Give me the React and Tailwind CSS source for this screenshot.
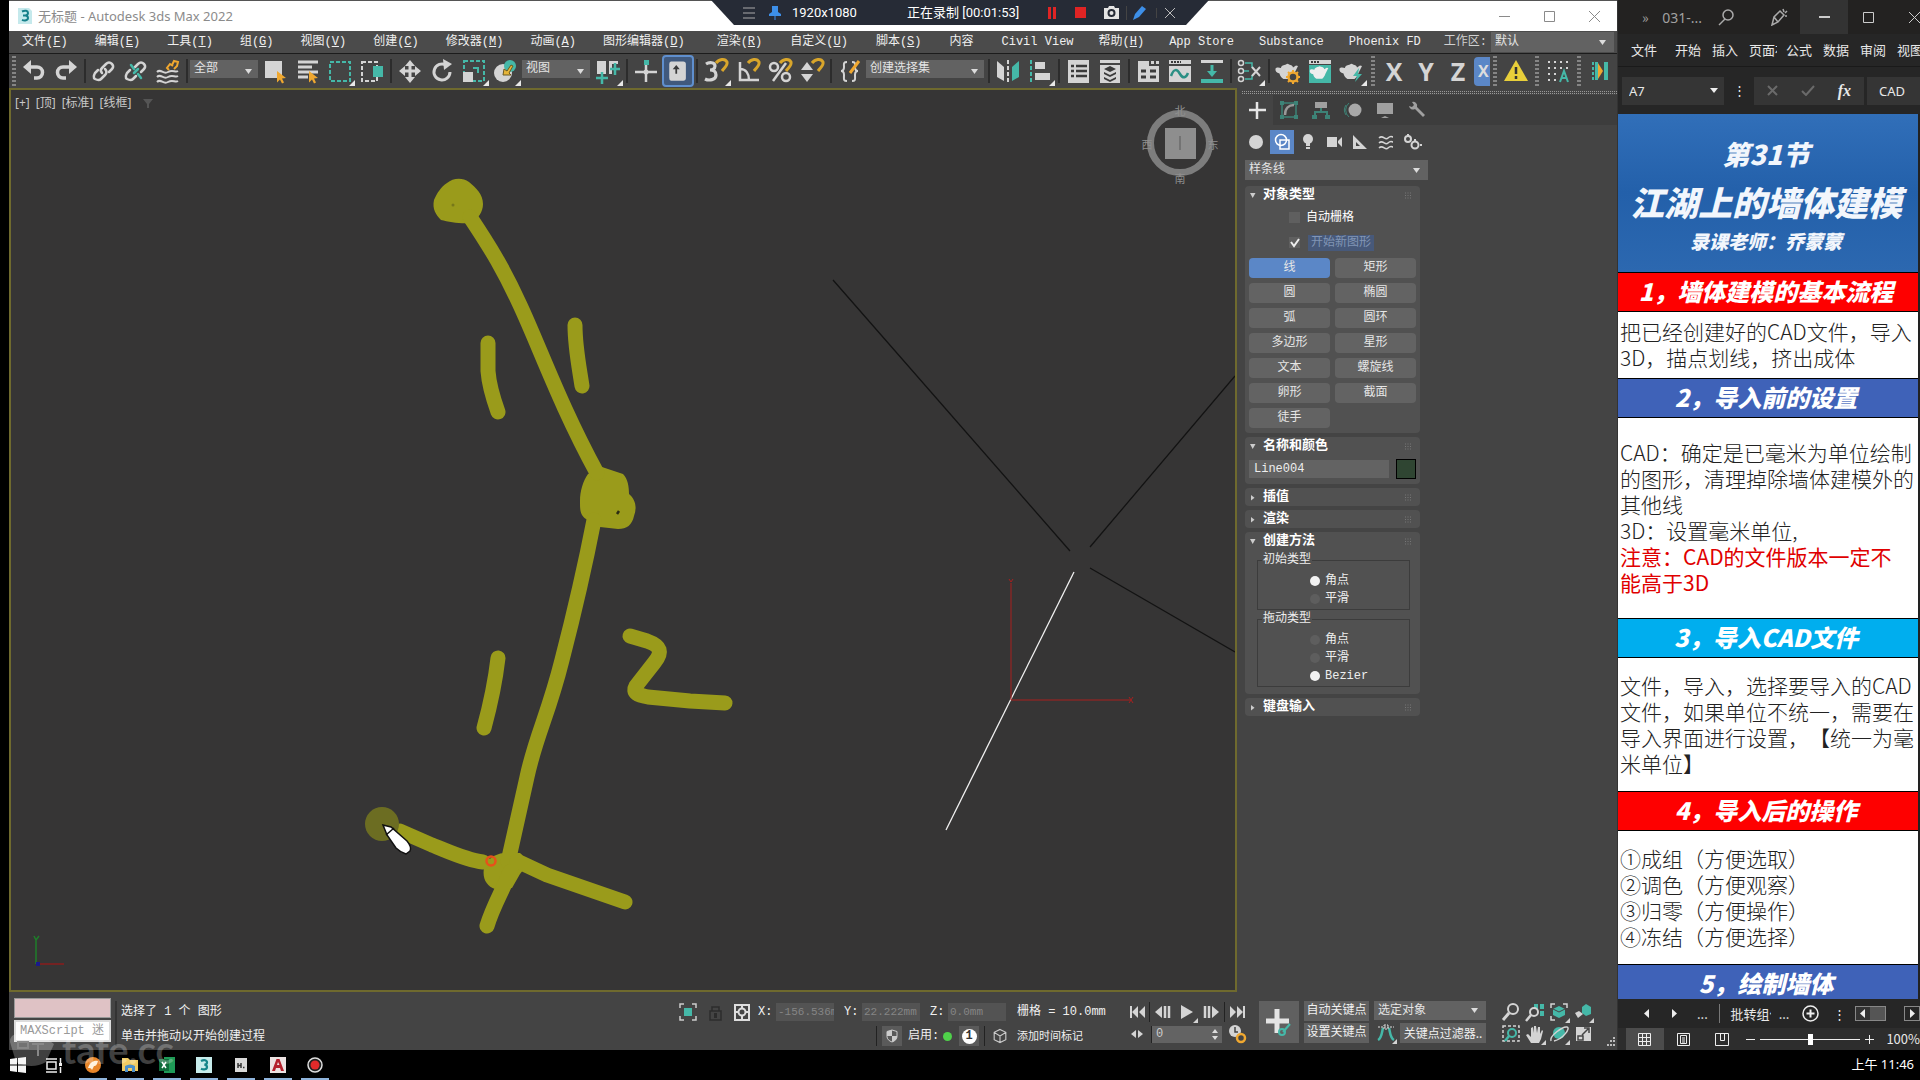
// App.jsx
import React from 'react';

const L = '#d4d4d4';
const T = '#45b8a8';
const Y = '#f0a830';

const Svg = ({ w = 32, h, box, children, className = '' }) => (
  <svg
    width={w}
    height={h || w}
    viewBox={box || `0 0 ${w} ${h || w}`}
    fill="none"
    className={`shrink-0 ${className}`}
    aria-hidden="true"
  >
    {children}
  </svg>
);

const Flyout = () => <path d="M31 25v6h-6z" fill="#e8e8e8" />;

const Teapot = ({ fill = L }) => (
  <path
    d="M9 13c0-2 3-3 5-3.400a1.800 1.800 0 0 1 3 0c2 .4 4 1.400 4 3l3-2 2 .5-3.500 7c-1 3-2.500 5-4 6h-7c-2-1-3.500-3-4-5.500-3-.5-4.500-2.500-4-5 .5-1.500 3.500-1.500 5.500-.6z"
    fill={fill}
  />
);

const Magnet = ({ x = 0, y = 0 }) => (
  <path
    transform={`translate(${x} ${y})`}
    d="M16 8c3-4 9-5 11-1 1 3-2 5-5 9"
    stroke="#d9a62b"
    strokeWidth="3"
  />
);

const icons = {
  undo: (
    <>
      <path d="M10 12h9a5 5 0 0 1 0 11h-3" stroke={L} strokeWidth="3.500" />
      <path d="M5 12l8-7v14z" fill={L} />
    </>
  ),
  redo: (
    <>
      <path d="M22 12h-9a5 5 0 0 0 0 11h3" stroke={L} strokeWidth="3.500" />
      <path d="M27 12l-8-7v14z" fill={L} />
    </>
  ),
  link: (
    <g stroke={L} strokeWidth="2.500" strokeLinecap="round">
      <path d="M14 18c-2-2-1-4 0-5l4-4c2-2 4-2 6 0s1 4 0 5l-3 3" />
      <path d="M17 14c2 2 2 4 0 6l-4 4c-2 2-4 1-6 0s-1-4 0-6l3-3" />
    </g>
  ),
  unlink: (
    <g strokeWidth="2.500" strokeLinecap="round">
      <path d="M15 12l3-3c2-2 4-2 6 0s1 4 0 5l-3 3" stroke={L} />
      <path d="M16 21l-3 3c-2 2-4 1-6 0s-1-4 0-6l3-3" stroke={L} />
      <path d="M11 10l3 4M18 19l3 4M18 14l-4 4" stroke={T} />
    </g>
  ),
  bind: (
    <>
      <path d="M5 17c4-4 6 3 11 0s7 1 10-1M5 22c4-4 6 3 11 0s7 1 10-1M5 27c4-4 6 3 11 0s7 1 10-1" stroke={L} strokeWidth="2" />
      <path d="M17 15l-2-2 3-4 3 2M20 10l2-4 4 1-1 4-3 3" stroke={Y} strokeWidth="2" />
    </>
  ),
  pick: (
    <>
      <path d="M5 6h17v17H5z" fill={L} />
      <path d="M17 16l9 7-4 .5 2 4-2 1-2-4-3 3z" fill={Y} />
    </>
  ),
  pickName: (
    <>
      <path d="M6 7h20M6 12h14M6 17h20M6 22h10" stroke={L} strokeWidth="3" />
      <path d="M17 16l9 7-4 .5 2 4-2 1-2-4-3 3z" fill={Y} />
    </>
  ),
  region: (
    <>
      <path d="M6 7h20v19H6z" stroke={T} strokeWidth="2" strokeDasharray="4 2" />
      <Flyout />
    </>
  ),
  crossing: (
    <>
      <path d="M6 7h15v19H6z" stroke={L} strokeWidth="2" strokeDasharray="4 2" />
      <path d="M17 11h10v11H17z" fill={T} />
    </>
  ),
  move: (
    <>
      <path d="M16 8v17M8 16h17" stroke={L} strokeWidth="3" />
      <path d="M16 5l5 6H11zM16 28l5-6H11zM5 16l6-5v10zM27 16l-6-5v10z" fill={L} />
    </>
  ),
  rotate: (
    <>
      <path d="M20 10a8 8 0 1 0 4 7" stroke={L} strokeWidth="3" />
      <path d="M17 4l9 5-8 6z" fill={L} />
    </>
  ),
  scale: (
    <>
      <path d="M6 6h20v20H6z" stroke={T} strokeWidth="2" strokeDasharray="4 2" />
      <path d="M5 17h10v10H5z" fill={L} />
      <path d="M15 13h5v5" stroke={T} strokeWidth="2" />
      <Flyout />
    </>
  ),
  place: (
    <>
      <circle cx="13" cy="18" r="9" fill={L} />
      <circle cx="20" cy="11" r="6" fill={T} />
      <path d="M13 20l1-6 3 2 4-6 2 1-4 7 2 2z" fill="#e6b53a" stroke="#6b5a20" />
      <Flyout />
    </>
  ),
  pivot: (
    <>
      <path d="M5 6h9v13H5zM17 6h9v13h-9z" fill={L} />
      <path d="M9 19h7v8H9zM20 9h7v10h-7z" fill="#444" />
      <path d="M10 17v12M4 23h12M23 8v12M18 14h10" stroke={T} strokeWidth="2.500" />
      <Flyout />
    </>
  ),
  manipulate: (
    <>
      <path d="M16 9v18M5 17h22" stroke={L} strokeWidth="2.500" />
      <path d="M14 5h5v5h-5z" fill={T} />
      <circle cx="16" cy="17" r="2.500" fill={L} />
    </>
  ),
  keyOverride: (
    <>
      <path d="M8 5h14q3 0 3 3v16q0 3-3 3H8q-2 0-2-3V8q0-3 2-3z" fill={L} />
      <path d="M13 19v-5h-3l4-5 4 5h-3v5z" fill="#3a3a3a" />
    </>
  ),
  snap: (
    <>
      <path d="M6 9c3-2 9-2 9 2 0 3-3 4-5 4 3 0 6 1 6 5 0 5-7 6-11 4" stroke={L} strokeWidth="3.200" />
      <Magnet />
      <Flyout />
    </>
  ),
  angleSnap: (
    <>
      <path d="M8 7v18h19M8 14c6 0 9 5 9 11" stroke={L} strokeWidth="2.500" />
      <Magnet />
    </>
  ),
  percentSnap: (
    <>
      <circle cx="10" cy="12" r="4" stroke={L} strokeWidth="2.500" />
      <circle cx="22" cy="22" r="4" stroke={L} strokeWidth="2.500" />
      <path d="M22 8L9 26" stroke={L} strokeWidth="2.500" />
      <Magnet />
    </>
  ),
  spinSnap: (
    <>
      <path d="M11 7l6 8H5zM11 27l6-8H5z" fill={L} />
      <Magnet />
    </>
  ),
  namedSet: (
    <>
      <path d="M13 7c-4 0-3 2-3 5 0 2-1 4-3 4 2 0 3 2 3 4 0 4-1 6 3 6M18 7c4 0 3 2 3 5 0 2 1 4 3 4-2 0-3 2-3 4 0 4 1 6-3 6" stroke={L} strokeWidth="2" />
      <path d="M16 18l9-12" stroke={Y} strokeWidth="3" />
    </>
  ),
  mirror: (
    <>
      <path d="M5 6l7 6v14l-7-4z" fill={L} />
      <path d="M27 6l-7 6v14l7-4z" fill={T} />
      <path d="M16 5v23" stroke={L} strokeWidth="2" strokeDasharray="4 2" />
    </>
  ),
  align: (
    <>
      <path d="M7 5v23" stroke={T} strokeWidth="2" strokeDasharray="4 2" />
      <path d="M11 7h10v7H11zM11 18h15v7H11z" fill={L} />
      <Flyout />
    </>
  ),
  sceneExplorer: (
    <>
      <path d="M6 5h21v23H6z" fill={L} />
      <path d="M9 11h3M14 11h11M9 16h3M14 16h11M9 21h3M14 21h11" stroke="#3a3a3a" strokeWidth="2.500" />
    </>
  ),
  layers: (
    <>
      <path d="M6 5h20v23H6z" fill={L} />
      <path d="M6 9h20" stroke="#444" strokeWidth="2" />
      <path d="M16 11l6 3-6 3-6-3zM10 17l6 3 6-3v2l-6 3-6-3zM10 22l6 3 6-3v2l-6 3-6-3z" fill="#3a3a3a" />
    </>
  ),
  ribbon: (
    <>
      <path d="M6 6h11v5h10v16H6z" fill={L} />
      <path d="M19 6h3v3h-3zM24 6h3v3h-3z" fill={L} />
      <path d="M9 16h5M18 16h6M9 22h5M18 22h6" stroke="#3a3a3a" strokeWidth="3" />
    </>
  ),
  curve: (
    <>
      <path d="M5 5h22v4H5zM5 11h22v16H5z" fill={L} />
      <path d="M7 7h10" stroke="#3a3a3a" strokeWidth="2" strokeDasharray="2 1" />
      <path d="M7 21c3-8 6-7 9-2s6 4 8-1" stroke="#2b8f84" strokeWidth="2.500" />
    </>
  ),
  schematic: (
    <>
      <path d="M5 5h22v3H5z" fill={L} />
      <path d="M5 24h22v4H5z" fill={T} />
      <path d="M16 10v8" stroke={T} strokeWidth="3" />
      <path d="M11 16h10l-5 6z" fill={T} />
    </>
  ),
  material: (
    <>
      <circle cx="7" cy="8" r="2.500" stroke={L} strokeWidth="1.500" />
      <circle cx="7" cy="16" r="2.500" stroke={L} strokeWidth="1.500" />
      <circle cx="7" cy="24" r="2.500" stroke={L} strokeWidth="1.500" />
      <path d="M11 8h7v5M11 24h7v-4M10 16h5" stroke={T} strokeWidth="1.500" />
      <path d="M18 12l8 9M26 12l-8 9" stroke={L} strokeWidth="2" />
      <Flyout />
    </>
  ),
  renderSetup: (
    <>
      <Teapot />
      <circle cx="21" cy="22" r="4.500" fill="#444" stroke={Y} strokeWidth="2.500" />
      <path d="M21 15v3M21 26v3M14 22h3M25 22h3M16 17l2 2M24 25l2 2M26 17l-2 2M18 25l-2 2" stroke={Y} strokeWidth="2" />
    </>
  ),
  renderFrame: (
    <>
      <path d="M5 5h22v4H5z" fill={L} />
      <path d="M7 7h9" stroke="#3a3a3a" strokeWidth="2" strokeDasharray="2 1" />
      <path d="M5 10h22v18H5z" fill={T} />
      <g transform="translate(3 4) scale(.82)"><Teapot fill="#eee" /></g>
    </>
  ),
  render: (
    <>
      <Teapot />
      <path d="M23 13l-6 8h4l-2 6 7-8h-4z" fill={T} />
      <Flyout />
    </>
  ),
  warn: (
    <>
      <path d="M16 5l12 21H4z" fill="#e8cf3a" />
      <path d="M16 12v7M16 21v3" stroke="#333" strokeWidth="2.500" />
    </>
  ),
  gridA: (
    <>
      <path d="M6 7h22M6 13h22M6 19h10M6 25h10" stroke={L} strokeWidth="2" strokeDasharray="2 4" />
      <path d="M18 27l4-11 4 11M19 23h6" stroke={T} strokeWidth="2" />
    </>
  ),
  snapBars: (
    <>
      <path d="M9 7v18" stroke={T} strokeWidth="2" strokeDasharray="3 2" />
      <path d="M11 7h3v18h-3z" fill={T} />
      <path d="M14 8l5 8-5 8z" fill={Y} />
      <path d="M20 7h4v18h-4z" fill={T} />
    </>
  ),
};

const menuGroups = [
  {
    gap: 'gap-[27px]',
    items: [['文件', 'F'], ['编辑', 'E'], ['工具', 'T'], ['组', 'G'], ['视图', 'V'], ['创建', 'C'], ['修改器', 'M'], ['动画', 'A'], ['图形编辑器', 'D']],
  },
  { gap: 'ml-8 gap-7', items: [['渲染', 'R'], ['自定义', 'U'], ['脚本', 'S'], ['内容']] },
  { gap: 'ml-7 gap-[25px]', items: [['Civil View'], ['帮助', 'H'], ['App Store'], ['Substance'], ['Phoenix FD']] },
];

const Pick = ({ label, value, className = '', selectClass = '' }) => (
  <div className={`relative shrink-0 ${className}`}>
    <select
      aria-label={label}
      className={`block w-full appearance-none bg-[#626262] pl-1 text-[12px] leading-[18px] text-[#e4e4e4] ${selectClass}`}
    >
      <option>{value}</option>
    </select>
    <span className="pointer-events-none absolute inset-y-0 right-2 flex items-center">
      <Svg w={7} h={5}><path d="M0 0h7L3.500 5z" fill="#dcdcdc" /></Svg>
    </span>
  </div>
);

const Tool = ({ name, active }) => (
  <button
    aria-label={name}
    className={`flex h-8 w-8 shrink-0 items-center justify-center ${active ? 'rounded border-2 border-[#5f8fce] bg-[#40597d]' : ''}`}
  >
    <Svg w={active ? 28 : 32} box="0 0 32 32">{icons[name]}</Svg>
  </button>
);

const Sep = () => <span className="mx-[2px] h-6 w-[2px] shrink-0 bg-[#2c2c2c]" />;
const Grip = () => <span className="mx-[3px] h-[30px] w-1 shrink-0 border-x-2 border-dotted border-[#858585]" />;

const TitleBar = () => (
  <div className="flex h-[31px] items-center border-t border-[#555] bg-white pl-[9px] font-['Noto_Sans','Noto_Sans_CJK_SC',sans-serif]">
    <Svg w={14} h={16}>
      <path d="M0 0h11l3 3v13H0z" fill="#c5e9ec" />
      <path d="M4 3.500c3-1.500 6-1 6 1.500 0 1.500-1 2.200-2.500 2.500C9 7.700 10 8.500 10 10c0 2.500-3.500 3-6 1.800M5 7.500h3" stroke="#17808a" strokeWidth="2" />
    </Svg>
    <span className="ml-[6px] text-[13px] leading-[20px] text-[#8b8b8b]">无标题 - Autodesk 3ds Max 2022</span>
    <div className="ml-auto flex text-[#8a8a8a]">
      <button aria-label="Minimize" className="flex h-[30px] w-[45px] items-center justify-center">
        <Svg w={11}><path d="M0 5.500h11" stroke="currentColor" /></Svg>
      </button>
      <button aria-label="Maximize" className="flex h-[30px] w-[45px] items-center justify-center">
        <Svg w={11}><path d="M.5.500h10v10H.5z" stroke="currentColor" /></Svg>
      </button>
      <button aria-label="Close" className="flex h-[30px] w-[45px] items-center justify-center">
        <Svg w={11}><path d="M0 0l11 11M11 0L0 11" stroke="currentColor" /></Svg>
      </button>
    </div>
  </div>
);

const MenuBar = () => (
  <nav className="flex h-[23px] items-center border-b border-[#1c1c1c] bg-[#4b4b4b] pl-[13px] text-[12px] leading-[18px] text-[#f0f0f0]">
    {menuGroups.map(({ gap, items }) => (
      <div key={gap} className={`flex shrink-0 ${gap}`}>
        {items.map(([text, key]) => (
          <button key={text} className="whitespace-nowrap">
            {text}
            {key && <>(<u>{key}</u>)</>}
          </button>
        ))}
      </div>
    ))}
    <span className="ml-auto mr-1 shrink-0 whitespace-nowrap text-[#d0d0d0]">工作区:</span>
    <Pick label="工作区" value="默认" className="mr-[3px] w-[123px]" selectClass="h-[20px]" />
  </nav>
);

const ToolBar = () => (
  <div className="flex h-[34px] items-center overflow-hidden bg-[#444]">
    <span className="ml-[3px] mr-[2px] h-[30px] w-1 shrink-0 border-x-2 border-dotted border-[#858585]" />
    <Tool name="undo" /><Tool name="redo" />
    <Sep />
    <Tool name="link" /><Tool name="unlink" /><Tool name="bind" />
    <Sep />
    <Pick label="选择过滤器" value="全部" className="w-[70px] pb-[5px] pr-[2px]" selectClass="h-[18px]" />
    <Tool name="pick" /><Tool name="pickName" /><Tool name="region" /><Tool name="crossing" />
    <Sep />
    <Tool name="move" /><Tool name="rotate" /><Tool name="scale" /><Tool name="place" />
    <Pick label="参考坐标系" value="视图" className="w-[70px] pb-[5px] pr-[2px]" selectClass="h-[18px]" />
    <Tool name="pivot" />
    <Sep />
    <Tool name="manipulate" /><Tool name="keyOverride" active />
    <Sep />
    <Tool name="snap" /><Tool name="angleSnap" /><Tool name="percentSnap" /><Tool name="spinSnap" />
    <Sep />
    <Tool name="namedSet" />
    <Pick label="命名选择集" value="创建选择集" className="w-[120px] pb-[5px] pr-[2px]" selectClass="h-[18px]" />
    <Sep />
    <Tool name="mirror" /><Tool name="align" />
    <Sep />
    <Tool name="sceneExplorer" /><Tool name="layers" />
    <Sep />
    <Tool name="ribbon" /><Tool name="curve" /><Tool name="schematic" />
    <Sep />
    <Tool name="material" />
    <Sep />
    <Tool name="renderSetup" /><Tool name="renderFrame" /><Tool name="render" />
    <Grip />
    {['X', 'Y', 'Z'].map((axis) => (
      <button key={axis} className="h-8 w-8 shrink-0 font-['Open_Sans',sans-serif] text-[25px] font-bold leading-8 text-[#d4d4d4]">
        {axis}
      </button>
    ))}
    <button className="h-[29px] w-4 shrink-0 overflow-hidden rounded-l bg-[#5b87c7] pl-1 text-left font-['Open_Sans',sans-serif] text-[16px] font-bold leading-7 text-[#ddd]">
      X
    </button>
    <Grip />
    <Tool name="warn" />
    <Grip />
    <Tool name="gridA" />
    <Grip />
    <Tool name="snapBars" />
  </div>
);

const Viewport = () => (
  <main className="relative min-w-0 flex-1 border-2 border-[#6f6a2e] bg-[#363535]">
    <div className="flex items-center gap-[6px] pl-1 pt-1 font-['Noto_Sans','Noto_Sans_CJK_SC',sans-serif] text-[12px] leading-[18px] text-[#c8c8c8]">
      <span>[+]</span><span>[顶]</span><span>[标准]</span><span>[线框]</span>
      <Svg w={10} h={9} className="ml-[6px]"><path d="M0 0h10L6 5v4H4V5z" fill="#555" /></Svg>
    </div>
    <svg className="absolute inset-0 size-full" viewBox="11 90 1224 900" preserveAspectRatio="xMinYMin meet" fill="none">
      <g stroke="#131313" strokeWidth="1.300">
        <path d="M833 280L1070 551M1090 547L1235 376M1090 568L1235 652" />
      </g>
      <path d="M1074 572L946 830" stroke="#f2f2f2" strokeWidth="1.300" />
      <path d="M1011 700V583M1011 700H1130M1009 579l2 3 2-3M1129 697l4 6M1133 697l-4 6" stroke="#a8201f" />
      <path d="M36 964v-24M34 936l2 4 3-4" stroke="#1f7d2a" strokeWidth="1.500" />
      <path d="M37 964h27" stroke="#8a1c1c" strokeWidth="1.500" />
      <path d="M36 962h4v4h-4z" fill="#1a1a8c" />

      {/* pen strokes */}
      <g fill="#9a9b1b">
        <path d="M447 183c6-5 15-6 22-1 7 6 14 12 14 22 0 8-5 15-12 19-10 1-22-1-30-3-5-5-9-11-7-20 3-7 7-13 13-17z" />
        <path d="M588 474l14-7 21 7c5 5 6 13 6 20 7 6 8 14 5 22-2 9-7 13-16 13l-18-2-14-8c-6-4-6-9-6-18 0-10 3-20 8-27z" />
        <path d="M484 868c2-8 10-14 20-15l16 0c6 4 6 14 0 21l-8 14-17 1c-8-3-13-10-11-21z" />
      </g>
      <g stroke="#9a9b1b" strokeWidth="15" strokeLinecap="round" strokeLinejoin="round">
        <path d="M470 217C492 250 505 272 520 305C540 348 560 405 597 473" />
        <path d="M594 520C587 556 576 606 562 660C548 716 536 735 527 777L508 862" />
        <path d="M488 343v28c1 14 5 27 10 41M575 325c0 22 4 41 7 61M498 658c-3 26-8 48-14 70" />
        <path d="M630 636l17 5c14 5 16 11 7 22l-18 23c-4 7 2 9 12 11l42 4 35 2" />
        <path d="M400 831l32 14c18 7 34 15 51 17M517 861l30 14c26 9 52 18 78 27M510 872c-8 20-17 34-23 54" />
      </g>
      <path d="M619 511l-2 3" stroke="#2c2c14" strokeWidth="2.500" />
      <circle cx="453" cy="205" r="1.500" fill="#77781a" />
      <circle cx="382" cy="824" r="17" fill="#6c6d22" />
      <circle cx="491" cy="861" r="4.500" stroke="#e8501a" strokeWidth="2.500" />
      <path d="M383 825l8 2 16 14q5 6 3 10l-4 3q-6-2-10-6l-9-13z" fill="#fff" stroke="#111" strokeWidth="1.500" />
      <path d="M386 835l8-7" stroke="#111" strokeWidth="1.500" />

      {/* view cube */}
      <circle cx="1180" cy="143" r="29.500" stroke="#7d7d7d" strokeWidth="7" />
      <path d="M1165 128h31v31h-31z" fill="#8e8e8e" />
      <path d="M1180 136v14" stroke="#6a6a6a" strokeWidth="1.500" />
      <g fill="#8f8f8f" fontSize="11" textAnchor="middle" fontFamily="Noto Sans CJK SC">
        <text x="1180" y="115">北</text>
        <text x="1147" y="149">西</text>
        <text x="1213" y="149">东</text>
        <text x="1180" y="183">南</text>
      </g>
    </svg>
  </main>
);

const Rollout = ({ title, open, children }) => (
  <section className="rounded-sm bg-[#515151] px-1">
    <h3>
      <button className="flex h-[18px] w-full items-center text-[13px] font-bold leading-[18px] text-white">
        <Svg w={7} className="mr-[7px]">
          <path d={open ? 'M1 1h5.500L3.700 6z' : 'M2 1v5.500L5.500 3.700z'} fill="#ccc" />
        </Svg>
        {title}
        <Svg w={7} className="ml-auto mr-1">
          <path d="M0 1h7M0 3.500h7M0 6h7" stroke="#777" strokeDasharray="1 1.500" />
        </Svg>
      </button>
    </h3>
    {children}
  </section>
);

const shapes = ['线', '矩形', '圆', '椭圆', '弧', '圆环', '多边形', '星形', '文本', '螺旋线', '卵形', '截面', '徒手'];

const RadioGroup = ({ legend, name, options, value }) => (
  <fieldset className="ml-2 mr-[6px] border border-[#3c3c3c] pb-px pt-[3px]">
    <legend className="ml-1 px-px text-[12px] leading-[18px] text-[#eee]">{legend}</legend>
    {options.map((option) => (
      <label key={option} className="ml-[52px] flex h-[18px] items-center gap-[5px] text-[12px] text-[#eee]">
        <input
          type="radio"
          name={name}
          defaultChecked={option === value}
          className="size-[10px] appearance-none rounded-full bg-[#5e5e5e] checked:bg-[#f2f2f2]"
        />
        {option}
      </label>
    ))}
  </fieldset>
);

const panelTabs = [
  <path key="0" d="M13 5v17M5 13h17" stroke="#e6e6e6" strokeWidth="2.500" />,
  <g key="1"><path d="M6 6h14v14H6z" stroke="#3d8377" strokeWidth="1.500" /><path d="M9 18c0-7 4-10 9-10" stroke="#999" strokeWidth="2.500" /><path d="M4 4h4v4H4zM18 4h4v4h-4zM4 18h4v4H4zM18 18h4v4h-4z" fill="#3d8377" /></g>,
  <g key="2"><path d="M7 5h12v6H7z" fill="#a0a0a0" /><path d="M13 11v4M7 21v-6h12v6" stroke="#3d8377" strokeWidth="2" /><path d="M4 18h5v4H4zM17 18h5v4h-5z" fill="#3d8377" /></g>,
  <g key="3"><circle cx="15" cy="13" r="6.500" fill="#a8a8a8" /><path d="M9 6a9 9 0 0 0 0 14M6 8a9 9 0 0 0 0 10" stroke="#3d8377" /></g>,
  <g key="4"><path d="M5 6h16v11H5z" fill="#a0a0a0" /><path d="M9 21l4-2 4 2z" fill="#a0a0a0" /></g>,
  <g key="5"><path d="M5 9a4 4 0 0 0 6 3l8 8 2-2-8-8a4 4 0 0 0-5-5l2 3-2 2z" fill="#a0a0a0" /></g>,
];

const categories = [
  <circle key="0" cx="12" cy="12" r="7" fill={L} />,
  <g key="1"><circle cx="11" cy="10" r="5.500" stroke="#fff" strokeWidth="1.500" /><path d="M10 10h9v9h-9z" stroke="#fff" strokeWidth="1.500" /></g>,
  <g key="2"><circle cx="12" cy="9" r="5" fill={L} /><path d="M10 13h4v3h-4zM10 17h4v2h-4z" fill={L} /></g>,
  <path key="3" d="M5 7h10v10H5zM16 11l4-4v10l-4-4z" fill={L} />,
  <path key="4" d="M5 5l14 14H5zM8 12v4h4z" fill={L} fillRule="evenodd" />,
  <path key="5" d="M5 8c4-4 6 3 9 0s4-1 5-1M5 13c4-4 6 3 9 0s4-1 5-1M5 18c4-4 6 3 9 0s4-1 5-1" stroke={L} strokeWidth="1.500" />,
  <g key="6" stroke={L} strokeWidth="2"><circle cx="8" cy="9" r="3" /><circle cx="15" cy="15" r="3.500" /><path d="M8 4v2M15 9v2M20 15h2" /></g>,
];

const CommandPanel = () => (
  <aside className="w-[380px] shrink-0 bg-[#444] pt-[3px]">
    <div className="ml-[5px] h-[3px] border-y border-dotted border-[#999]" />
    <div className="mb-[5px] ml-1 mt-px flex h-[30px] items-center bg-[#3d3d3d]">
      {panelTabs.map((icon, i) => (
        <button key={i} aria-label={`tab ${i + 1}`} className={`flex h-full w-8 items-center justify-center ${i === 0 ? 'bg-[#444]' : ''}`}>
          <Svg w={26}>{icon}</Svg>
        </button>
      ))}
    </div>
    <div className="ml-[7px] flex gap-[2px]">
      {categories.map((icon, i) => (
        <button key={i} aria-label={`category ${i + 1}`} className={`size-6 ${i === 1 ? 'bg-[#5b87c7]' : ''}`}>
          <Svg w={24}>{icon}</Svg>
        </button>
      ))}
    </div>
    <Pick label="形状类别" value="样条线" className="ml-2 mt-[6px] w-[183px]" selectClass="h-[20px]" />
    <div className="ml-2 mt-[6px] flex w-[175px] flex-col gap-1">
      <Rollout title="对象类型" open>
        <div className="pb-[3px] pt-px">
          <label className="ml-10 flex h-[25px] items-center gap-[6px] text-[12px] text-white">
            <input type="checkbox" className="size-[11px] appearance-none bg-[#5f5f5f]" />
            自动栅格
          </label>
          <label className="ml-10 flex h-[25px] items-center gap-[8px] text-[12px] leading-[16px] text-[#8195b5]">
            <span className="relative flex">
              <input type="checkbox" defaultChecked className="size-[11px] appearance-none bg-[#5f5f5f]" />
              <Svg w={11} className="pointer-events-none absolute inset-0"><path d="M2 5l3 4 5-7" stroke="#eee" strokeWidth="2" /></Svg>
            </span>
            <span className="bg-[#47597a] px-[3px]">开始新图形</span>
          </label>
        </div>
        <div className="grid grid-cols-2 gap-[5px] pb-[5px]">
          {shapes.map((shape) => (
            <button
              key={shape}
              className={`h-[20px] rounded-sm text-[12px] leading-[18px] text-[#e6e6e6] ${shape === '线' ? 'bg-[#5b87c7]' : 'bg-[#636363]'}`}
            >
              {shape}
            </button>
          ))}
        </div>
      </Rollout>
      <Rollout title="名称和颜色" open>
        <div className="flex items-center gap-[7px] pb-[5px] pt-1">
          <input aria-label="名称" defaultValue="Line004" className="h-[18px] min-w-0 flex-1 bg-[#636363] pl-[5px] text-[12px] text-[#eee]" />
          <button aria-label="颜色" className="size-[20px] border border-black bg-[#2f4532]" />
        </div>
      </Rollout>
      <Rollout title="插值" />
      <Rollout title="渲染" />
      <Rollout title="创建方法" open>
        <div className="pb-[7px] pt-px">
          <RadioGroup legend="初始类型" name="initial" options={['角点', '平滑']} value="角点" />
          <RadioGroup legend="拖动类型" name="drag" options={['角点', '平滑', 'Bezier']} value="Bezier" />
        </div>
      </Rollout>
      <Rollout title="键盘输入" />
    </div>
  </aside>
);

const coords = [['X:', '-156.536m'], ['Y:', '22.222mm'], ['Z:', '0.0mm']];

const Small = ({ label, children, size = 22 }) => (
  <button aria-label={label} className="flex h-[22px] w-6 shrink-0 items-center justify-center">
    <Svg w={size} box="0 0 22 22">{children}</Svg>
  </button>
);

const SmallSep = () => <span className="h-5 w-px shrink-0 bg-[#222]" />;

const StatusBar = () => (
  <footer className="flex h-[58px] items-start bg-[#444] pl-[5px] pt-[6px] text-[12px] leading-[18px] text-[#f0f0f0]">
    <div className="w-[97px] shrink-0 space-y-[2px]">
      <div className="h-[20px] border border-[#999] bg-[#dfc2c5]" />
      <input aria-label="MAXScript" defaultValue="MAXScript 迷" className="block h-[22px] w-full border-2 border-[#ddd] bg-white pb-1 pl-1 text-[#999]" />
    </div>
    <div className="flex flex-1 items-start pt-[3px]">
      <div className="ml-[4px] flex shrink-0 flex-col gap-[7px] border-l-2 border-[#333] pl-[4px] pt-[2px]">
        <p>选择了 1 个 图形</p>
        <p>单击并拖动以开始创建过程</p>
      </div>
      <div className="ml-auto flex flex-col items-end">
        <div className="flex h-[22px] items-center">
          <div className="flex gap-[3px]">
            <Small label="隔离"><path d="M3 7V3h4M15 3h4v4M19 15v4h-4M7 19H3v-4" stroke="#ccc" strokeWidth="1.500" /><path d="M7 7h8v8H7z" fill={T} /></Small>
            <Small label="锁定"><path d="M6 10h11v9H6zM8 10V6h7v4" stroke="#2c2c2c" strokeWidth="1.500" /><path d="M10 12h3v5h-3z" fill="#2c2c2c" /></Small>
            <Small label="坐标模式"><path d="M4 4h14v15H4zM11 4v4M11 15v4M4 11h4M14 11h5" stroke="#ddd" strokeWidth="2" /><circle cx="11" cy="11" r="3.500" stroke="#ddd" strokeWidth="2" /></Small>
          </div>
          {coords.map(([axis, value]) => (
            <label key={axis} className="flex items-center">
              <span className="w-[22px] pl-1">{axis}</span>
              <input disabled defaultValue={value} className="mr-[6px] h-[18px] w-[58px] bg-[#535353] pl-[2px] text-[11px] text-[#858585]" />
            </label>
          ))}
        </div>
        <div className="flex h-[26px] items-center">
          <SmallSep />
          <button aria-label="安全" className="ml-[5px] flex size-[20px] items-center justify-center bg-[#5a5a5a]">
            <Svg w={14}><path d="M7 1l5 1.500v5C12 10 10 12 7 13 4 12 2 10 2 7.500v-5z" stroke="#ccc" /><path d="M7 1v6h5v1c0 2-2 4-5 5V7H2V2.500z" fill="#ccc" /></Svg>
          </button>
          <span className="ml-[6px] w-[31px] whitespace-nowrap">启用:</span>
          <span className="ml-1 size-[9px] rounded-full bg-[#4fd14a]" />
          <button className="ml-[7px] flex size-[20px] items-center justify-center bg-[#5a5a5a]">
            <span className="size-[15px] rounded-full bg-white font-bold leading-[15px] text-[#333]">1</span>
          </button>
          <span className="ml-[5px] mr-[3px] flex"><SmallSep /></span>
          <Small label="时间标记" size={16}><path d="M11 2l8 4v10l-8 4-8-4V6zM3 6l8 5 8-5M11 11v9" stroke="#ccc" strokeWidth="1.500" /></Small>
        </div>
      </div>
      <div className="ml-[5px] w-[108px] shrink-0 whitespace-nowrap pt-[2px]">
        <p>栅格 = 10.0mm</p>
        <p className="mt-[7px] text-[11px]">添加时间标记</p>
      </div>
      <div className="w-[124px] shrink-0">
        <div className="flex h-[22px] items-center justify-between">
          <Small label="转至开头"><path d="M5 5v12" stroke={L} strokeWidth="2" /><path d="M12 5v12l-6-6zM19 5v12l-6-6z" fill={L} /></Small>
          <SmallSep />
          <Small label="上一帧"><path d="M10 5v12l-7-6z" fill={L} /><path d="M13 5v12M17 5v12" stroke={L} strokeWidth="2.500" /></Small>
          <Small label="播放"><path d="M5 4l12 7-12 7z" fill={L} /><path d="M22 17v5h-5z" fill={L} /></Small>
          <Small label="下一帧"><path d="M12 5v12l7-6z" fill={L} /><path d="M5 5v12M9 5v12" stroke={L} strokeWidth="2.500" /></Small>
          <SmallSep />
          <Small label="转至结尾"><path d="M18 5v12" stroke={L} strokeWidth="2" /><path d="M11 5v12l6-6zM4 5v12l6-6z" fill={L} /></Small>
        </div>
        <div className="flex h-[22px] items-center">
          <Small label="关键点模式"><path d="M10 7v8l-5-4zM12 7v8l5-4z" fill={L} /></Small>
          <span className="relative ml-[2px] flex">
            <input aria-label="当前帧" defaultValue="0" className="h-[17px] w-[71px] border-l border-[#222] bg-[#636363] pl-1 text-[#ccc]" />
            <Svg w={6} h={11} className="absolute right-1 top-[3px]"><path d="M3 0l3 4H0zM3 11l3-4H0z" fill="#ddd" /></Svg>
          </span>
          <span className="ml-[3px] flex"><Small label="时间配置"><circle cx="9" cy="8" r="6" fill={L} /><path d="M9 4v5h3" stroke="#444" strokeWidth="1.500" /><circle cx="15" cy="15" r="4" fill="#444" stroke={Y} strokeWidth="2.500" /></Small></span>
        </div>
      </div>
      <button aria-label="设置关键点" className="ml-[10px] h-[42px] w-[40px] shrink-0 bg-[#606060]">
        <Svg w={40} h={42}>
          <path d="M18 8v24M7 20h23" stroke="#e4e4e4" strokeWidth="5" />
          <path d="M31 23l-7 8" stroke={T} strokeWidth="2" />
          <circle cx="23" cy="31" r="3" stroke={T} strokeWidth="2" />
        </Svg>
      </button>
      <div className="ml-[5px] flex shrink-0 flex-col gap-[2px]">
        <button className="h-[20px] w-[65px] whitespace-nowrap bg-[#606060]">自动关键点</button>
        <button className="h-[20px] w-[65px] whitespace-nowrap bg-[#606060]">设置关键点</button>
      </div>
      <div className="ml-[5px] w-[112px] shrink-0">
        <Pick label="关键点集" value="选定对象" selectClass="h-[19px]" />
        <div className="mt-[3px] flex h-[20px] items-center justify-between">
          <Small label="切线"><path d="M3 18c4-2 4-9 5-12M19 18c-4-2-4-9-5-12" stroke={T} strokeWidth="2.500" /><path d="M3 5h16M9 3h4v4H9z" stroke="#ddd" strokeDasharray="2 1" /><path d="M22 17v5h-5z" fill={L} /></Small>
          <button className="h-[20px] w-[86px] whitespace-nowrap bg-[#606060] font-['Noto_Sans_CJK_SC',sans-serif]">关键点过滤器..</button>
        </div>
      </div>
      <div className="ml-[13px] grid shrink-0 grid-cols-4">
        <Small label="缩放"><circle cx="13" cy="8" r="5" stroke={L} strokeWidth="2" /><path d="M9 12l-6 7" stroke={L} strokeWidth="3" /></Small>
        <Small label="缩放所有"><path d="M10 3h4v5h-4zM16 3h4v5h-4zM16 10h4v5h-4z" fill={T} /><circle cx="10" cy="11" r="4" stroke={L} strokeWidth="2" /><path d="M7 14l-5 6" stroke={L} strokeWidth="2.500" /></Small>
        <Small label="最大化显示"><path d="M3 7V3h4M15 3h4v4M7 19H3v-4" stroke={L} strokeWidth="1.500" /><path d="M11 5l6 3v6l-6 3-6-3V8z" fill={T} /><path d="M5 8l6 3 6-3" stroke="#444" /><path d="M22 17v5h-5z" fill={L} /></Small>
        <Small label="所有最大化显示"><path d="M14 3l5 3v7l-5 2-4-3V6z" fill={T} /><path d="M3 12l4-2 4 3-5 4z" fill={L} /><path d="M22 17v5h-5z" fill={L} /></Small>
        <Small label="缩放区域"><path d="M3 3h16v15H3z" stroke={L} strokeWidth="1.500" strokeDasharray="3 2" /><circle cx="12" cy="10" r="4" stroke={T} strokeWidth="2" /><path d="M9 13l-4 5" stroke={T} strokeWidth="2.500" /></Small>
        <Small label="平移"><path d="M7 20l-5-8 2-1 3 3V5l2-1 1 6V3h2l1 7 1-6h2v7l2-4 1 1-2 8-2 4z" fill={L} /><path d="M22 17v5h-5z" fill={L} /></Small>
        <Small label="环绕"><circle cx="11" cy="10" r="6" fill={T} /><path d="M3 18C1 13 15 3 19 4s-4 12-13 14" stroke={L} strokeWidth="1.500" /><path d="M22 17v5h-5z" fill={L} /></Small>
        <Small label="最大化视口"><path d="M4 4h15v14H4z" fill={L} /><path d="M6 13h5v4H6zM10 12l6-6M12 5h5v5" stroke="#444" strokeWidth="1.500" /></Small>
      </div>
      <Svg w={9} className="ml-[11px] mr-[2px] mt-[36px]"><path d="M7 1h2M4 4h5M1 8h8" stroke="#bbb" strokeWidth="2" strokeDasharray="2 1" /></Svg>
    </div>
  </footer>
);

const RecorderBar = () => (
  <div className="absolute left-1/2 top-0 flex h-[25px] w-[498px] -translate-x-1/2 items-center bg-[#262b36] pl-[32px] font-['Roboto','Noto_Sans_CJK_SC',sans-serif] text-[14px] text-white [clip-path:polygon(0_0,100%_0,475px_100%,23px_100%)]">
    <button aria-label="Menu"><Svg w={12}><path d="M0 1h12M0 6h12M0 11h12" stroke="#aaa" /></Svg></button>
    <button aria-label="Pin" className="ml-[14px]"><Svg w={12} h={14}><path d="M3 0h6v6l3 2v2H0V8l3-2z" fill="#3d8fe8" /><path d="M6 10v4" stroke="#3d8fe8" /></Svg></button>
    <span className="ml-[11px] w-[64px] text-[13px]">1920x1080</span>
    <span className="ml-[51px] w-[109px] whitespace-nowrap text-[13px]">正在录制 [00:01:53]</span>
    <div className="ml-[32px] flex items-center gap-[18px]">
      <button aria-label="Pause"><Svg w={9} h={12}><path d="M0 0h3v12H0zM5 0h3v12H5z" fill="#e02424" /></Svg></button>
      <button aria-label="Stop"><Svg w={11}><path d="M0 0h11v11H0z" fill="#e02424" /></Svg></button>
      <button aria-label="Snapshot"><Svg w={15} h={13}><path d="M0 2h4l1-2h5l1 2h4v11H0z" fill="#e4e4e4" /><circle cx="7.500" cy="7" r="3" stroke="#262b36" strokeWidth="2" /></Svg></button>
    </div>
    <button aria-label="Draw" className="ml-[7px] border-l border-[#444] pl-[6px]"><Svg w={14}><path d="M0 14l2-6 7-8 4 3-7 8z" fill="#3d8fe8" /></Svg></button>
    <button aria-label="Close" className="ml-[9px] border-l border-[#444] pl-[8px]"><Svg w={10}><path d="M0 0l10 10M10 0L0 10" stroke="#bbb" /></Svg></button>
  </div>
);

const ribbonTabs = ['文件', '开始', '插入', '页面布局', '公式', '数据', '审阅', '视图'];

const sections = [
  { title: '1，墙体建模的基本流程', bar: 'bg-[#fe0000]', body: 'h-[66px]', lines: ['把已经创建好的CAD文件，导入', '3D，描点划线，挤出成体'] },
  {
    title: '2，导入前的设置',
    bar: 'bg-[#3f62b8]',
    body: 'h-[200px]',
    lines: ['CAD：确定是已毫米为单位绘制', '的图形，清理掉除墙体建模外的', '其他线', '3D：设置毫米单位,'],
    warning: ['注意：CAD的文件版本一定不', '能高于3D'],
  },
  { title: '3，导入CAD文件', bar: 'bg-[#00aeee]', body: 'h-[133px]', lines: ['文件，导入，选择要导入的CAD', '文件，如果单位不统一，需要在', '导入界面进行设置，【统一为毫', '米单位】'] },
  { title: '4，导入后的操作', bar: 'bg-[#fe0000]', body: 'h-[133px]', lines: ['①成组（方便选取）', '②调色（方便观察）', '③归零（方便操作）', '④冻结（方便选择）'] },
  { title: '5，绘制墙体', bar: 'bg-[#3f62b8]', lines: [] },
];

const Sheet = () => (
  <div className="min-h-0 flex-1 overflow-hidden border-r-2 border-[#222] bg-white [text-spacing-trim:space-all]">
    <header className="flex h-[158px] flex-col items-center bg-linear-to-b from-[#316fb9] via-[#2360aa] to-[#2c68b0] pr-1 pt-[19px] font-black italic text-[#f2f6fc]">
      <p className="text-[27px] leading-[42px]">第31节</p>
      <h1 className="whitespace-nowrap text-[34px] leading-[54px]">江湖上的墙体建模</h1>
      <p className="text-[19px] leading-[24px]">录课老师：乔蒙蒙</p>
    </header>
    {sections.map(({ title, bar, body, lines, warning = [] }) => (
      <section key={title}>
        <h2 className={`h-[40px] whitespace-nowrap border-y border-black pr-1 text-center text-[24px] font-black italic leading-[36px] text-white ${bar}`}>
          {title}
        </h2>
        {lines.length > 0 && (
          <div className={`flex flex-col justify-center whitespace-nowrap pb-[2px] pl-[2px] text-[21px] font-light leading-[26px] text-[#222] ${body}`}>
            {lines.map((line) => <p key={line}>{line}</p>)}
            {warning.map((line) => <p key={line} className="font-normal text-[#e00000]">{line}</p>)}
          </div>
        )}
      </section>
    ))}
  </div>
);

const Excel = () => (
  <div className="flex w-[303px] shrink-0 flex-col overflow-hidden border-l border-[#333] bg-[#262626] font-['Noto_Sans_CJK_SC',sans-serif] text-[#e8e8e8]">
    <div className="flex h-[34px] shrink-0 items-center bg-[#232221] pl-6 text-[14px] text-[#a0a0a0]">
      <span className="w-[27px]">»</span>
      <span className="w-[40px] font-['Noto_Sans',sans-serif]">031-...</span>
      <button aria-label="Search" className="ml-[16px]"><Svg w={17}><circle cx="10" cy="6" r="5" stroke="#aaa" strokeWidth="1.500" /><path d="M7 10l-6 6" stroke="#aaa" strokeWidth="1.500" /></Svg></button>
      <button aria-label="Draw" className="ml-[35px]"><Svg w={18}><path d="M2 17l2-8 6-6 4 4-6 7zM4 9l4 5M13 1l1 3M17 3l-2 2M17 8h-2" stroke="#aaa" strokeWidth="1.500" /></Svg></button>
      <button aria-label="Minimize" className="ml-[12px] flex h-full w-[48px] shrink-0 items-center justify-center bg-[#333]"><Svg w={11}><path d="M0 5h11" stroke="#fff" strokeWidth="1.500" /></Svg></button>
      <button aria-label="Maximize" className="ml-[15px]"><Svg w={11}><path d="M.5.500h10v10H.5z" stroke="#ccc" /></Svg></button>
      <button aria-label="Close" className="ml-[35px]"><Svg w={11}><path d="M0 0l11 11M11 0L0 11" stroke="#ccc" /></Svg></button>
    </div>
    <div className="flex h-[32px] shrink-0 items-center gap-[9px] bg-[#262626] pl-[13px] text-[13px]">
      {ribbonTabs.map((tab) => (
        <button key={tab} className={`w-[28px] shrink-0 overflow-hidden whitespace-nowrap text-left ${tab === '文件' ? 'mr-[7px]' : ''}`}>{tab}</button>
      ))}
    </div>
    <div className="flex h-[48px] shrink-0 items-center border-t border-[#1a1a1a] pl-1 font-['Noto_Sans',sans-serif] text-[13px]">
      <label className="relative flex">
        <input aria-label="Name box" defaultValue="A7" className="h-[28px] w-[102px] bg-[#353535] pl-[7px]" />
        <Svg w={8} h={5} className="absolute right-[6px] top-[11px]"><path d="M0 0h8L4 5z" fill="#eee" /></Svg>
      </label>
      <span className="w-[30px] text-center">⋮</span>
      <div className="flex h-[28px] w-[110px] items-center justify-between bg-[#353535] px-[13px]">
        <Svg w={11}><path d="M1 1l9 9M10 1l-9 9" stroke="#6a6a6a" strokeWidth="2" /></Svg>
        <Svg w={14} h={11}><path d="M1 6l4 4 8-9" stroke="#6a6a6a" strokeWidth="2" /></Svg>
        <span className="font-['Liberation_Serif',serif] text-[16px] font-bold italic">fx</span>
      </div>
      <input aria-label="Formula" defaultValue="CAD" className="ml-[3px] h-[28px] min-w-0 flex-1 bg-[#353535] pl-[12px]" />
    </div>
    <Sheet />
    <div className="flex h-[29px] shrink-0 items-center bg-[#262626] pl-[26px] text-[13px]">
      <Svg w={5} h={9}><path d="M5 0v9L0 4.500z" fill="#eee" /></Svg>
      <Svg w={5} h={9} className="ml-[23px]"><path d="M0 0v9l5-4.500z" fill="#eee" /></Svg>
      <span className="ml-[20px] w-[22px]">...</span>
      <button className="w-[53px] overflow-hidden whitespace-nowrap border-l border-[#777] pl-[11px] text-left">批转组件</button>
      <span className="ml-[8px] w-[24px]">...</span>
      <button aria-label="New sheet"><Svg w={17}><circle cx="8.500" cy="8.500" r="7.500" stroke="#eee" strokeWidth="1.500" /><path d="M8.500 4.500v8M4.500 8.500h8" stroke="#eee" strokeWidth="2" /></Svg></button>
      <span className="ml-[10px] w-[22px] text-center">⋮</span>
      <span className="ml-1 flex h-[15px] w-[32px] items-center border border-[#888] bg-[#555]">
        <span className="flex h-full w-[14px] items-center justify-center bg-[#333]"><Svg w={5} h={9}><path d="M5 0v9L0 4.500z" fill="#eee" /></Svg></span>
      </span>
      <span className="ml-[18px] flex h-[15px] w-[16px] shrink-0 items-center justify-center border border-[#888]"><Svg w={5} h={9}><path d="M0 0v9l5-4.500z" fill="#eee" /></Svg></span>
    </div>
    <div className="flex h-[22px] shrink-0 items-center bg-[#2d2d2d] pl-[8px] text-[13px]">
      <button aria-label="Normal view" className="flex h-full w-[40px] items-center justify-center bg-[#4c4c4c]"><Svg w={13}><path d="M.5.500h12v12H.5zM4.500 0v13M8.500 0v13M0 4.500h13M0 8.500h13" stroke="#eee" /></Svg></button>
      <button aria-label="Page layout" className="flex w-[42px] justify-center"><Svg w={13}><path d="M.5.500h12v12H.5zM3.500 2.500h6v8h-6zM5 5h3M5 7h3M5 9h3" stroke="#eee" /></Svg></button>
      <button aria-label="Page break" className="flex w-[40px] justify-center"><Svg w={14} h={13}><path d="M.5.500h13v12H.5zM5.500 0v7.500h4V0" stroke="#eee" /></Svg></button>
      <Svg w={9} className="ml-[6px]"><path d="M0 4.500h9" stroke="#eee" /></Svg>
      <input
        aria-label="Zoom"
        type="range"
        className="mx-[5px] h-[12px] w-[100px] appearance-none bg-linear-to-r from-[#eee] to-[#eee] bg-[length:100%_1px] bg-center bg-no-repeat [&::-webkit-slider-thumb]:h-[11px] [&::-webkit-slider-thumb]:w-[5px] [&::-webkit-slider-thumb]:appearance-none [&::-webkit-slider-thumb]:bg-white"
      />
      <Svg w={9}><path d="M0 4.500h9M4.500 0v9" stroke="#eee" /></Svg>
      <span className="ml-[12px] text-[13px]">100%</span>
    </div>
  </div>
);

const apps = [
  <g key="0"><circle cx="8" cy="8" r="8" fill="#e8862a" /><path d="M3 11c2-6 6-8 10-7-1 4-2 5-4 5l-2 4c-1-2-2-2-4-2z" fill="#fff3df" /></g>,
  <g key="1"><path d="M0 1h6l2 2h8v11H0z" fill="#f1cb63" /><path d="M3 15V9q5-3 10 0v6h-3v-4H6v4z" fill="#4b8fc9" /></g>,
  <g key="2"><path d="M5 0h11v16H5z" fill="#1f9b57" /><path d="M0 2h10v12H0z" fill="#0f6b3a" /><path d="M3 5l4 6M7 5l-4 6" stroke="#fff" strokeWidth="1.500" /></g>,
  <g key="3"><path d="M0 0h16v16H0z" fill="#c8ecec" /><path d="M5 4c3-1.500 6-1 6 1.500 0 1.500-1 2-2.500 2.200C10 8 11 8.500 11 10c0 2.500-3.500 3-6 1.800" stroke="#14858a" strokeWidth="2.200" /></g>,
  <g key="4"><path d="M2 1h12v14H2z" fill="#d9d9d9" /><path d="M5 6v5M8 6v5M5 8.500h3M10 10.500h1.500" stroke="#333" strokeWidth="1.500" /></g>,
  <g key="5"><path d="M0 0h16v16H0z" fill="#ece2e2" /><path d="M2 14L6.500 2h3L14 14h-3l-1-3H6l-1 3zM7 8h2.500L8 5z" fill="#b3202c" fillRule="evenodd" /></g>,
  <g key="6"><circle cx="8" cy="8" r="7" fill="#222" stroke="#ddd" strokeWidth="1.500" /><circle cx="8" cy="8" r="4.500" fill="#e02a2a" /></g>,
];

const TaskBar = () => (
  <div className="relative flex h-[30px] shrink-0 items-center bg-black text-white">
    <button aria-label="Start" className="ml-[10px]"><Svg w={16}><path d="M0 2l7-1v6.500H0zM8 1l8-1v7.500H8zM0 8.500h7V15l-7-1zM8 8.500h8V16l-8-1z" fill="#f4f4f4" /></Svg></button>
    <button aria-label="Task view" className="ml-[20px] mr-[11px]"><Svg w={17} h={15}><path d="M0 1h11M0 14h11M1 4h9v7H1zM14.500 0v5M14.500 9v6" stroke="#eee" strokeWidth="1.500" /><path d="M13 5h3v3h-3z" fill="#eee" /></Svg></button>
    {apps.map((icon, i) => (
      <button key={i} aria-label={`app ${i + 1}`} className="flex h-full w-[37px] flex-col items-center justify-between pt-[7px]">
        <Svg w={16}>{icon}</Svg>
        <span className="h-[2px] w-[28px] bg-[#8fb4dc]" />
      </button>
    ))}
    <time className="ml-auto mr-[6px] font-['Noto_Sans','Noto_Sans_CJK_SC',sans-serif] text-[13px]">上午 11:46</time>
    <div className="pointer-events-none absolute -top-[20px] left-[10px] flex items-center gap-[6px] text-white/25">
      <Svg w={46} h={38}><path d="M0 12q0-8 8-8h22l14 10-8 18q-14 8-30 0z" fill="currentColor" /><path d="M8 12h10v6H8zM22 14h12M28 14v12" stroke="#888" strokeWidth="2" /></Svg>
      <span className="font-['Lato',sans-serif] text-[38px] font-bold leading-[38px]">tafe.cc</span>
    </div>
  </div>
);

export default function App() {
  return (
    <div className="relative flex h-screen flex-col overflow-hidden bg-black font-['Liberation_Mono','Noto_Sans_CJK_SC',monospace]">
      <div className="flex min-h-0 flex-1 pl-[9px]">
        <div className="flex min-w-0 flex-1 flex-col">
          <TitleBar />
          <MenuBar />
          <ToolBar />
          <div className="flex min-h-0 flex-1">
            <Viewport />
            <CommandPanel />
          </div>
          <StatusBar />
        </div>
        <Excel />
      </div>
      <TaskBar />
      <RecorderBar />
    </div>
  );
}
